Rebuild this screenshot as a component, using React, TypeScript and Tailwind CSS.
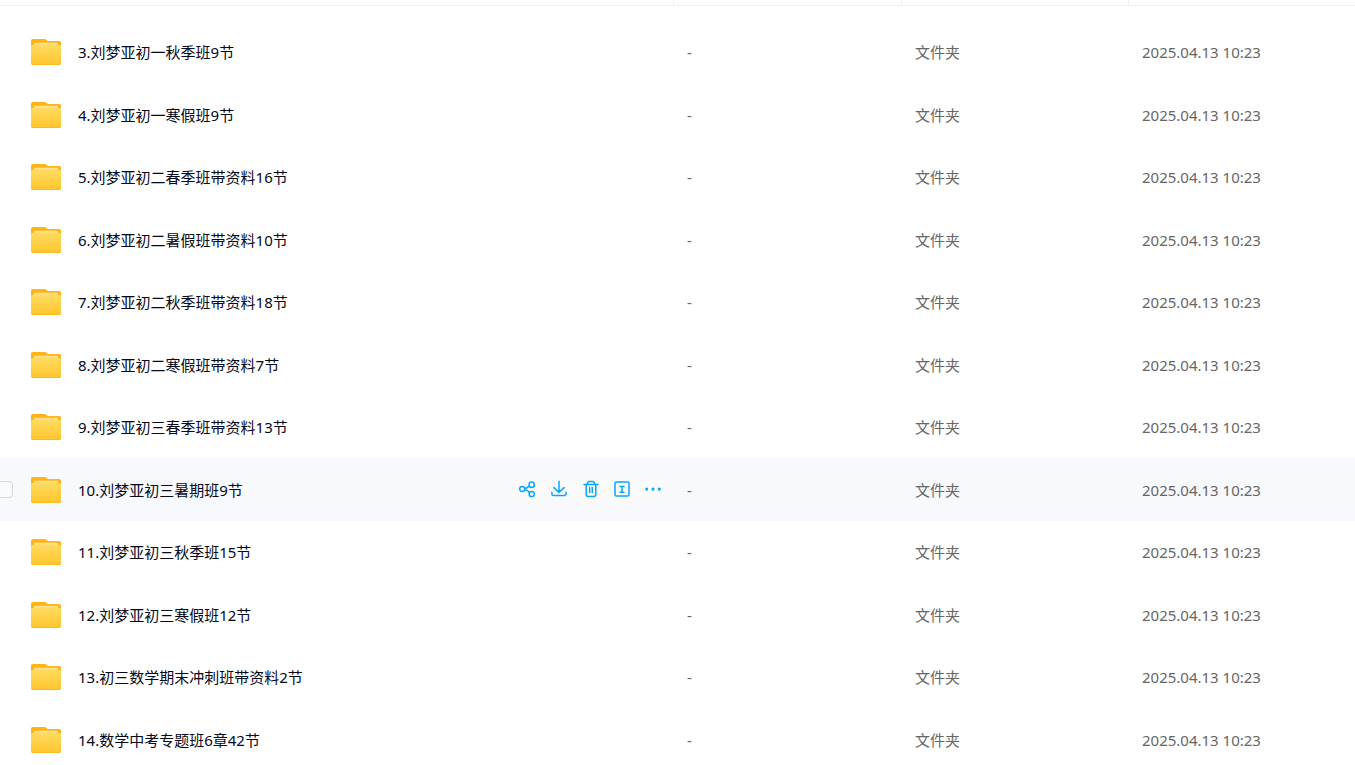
import type { ReactNode } from 'react';

const files = [
  { name: '3.刘梦亚初一秋季班9节' },
  { name: '4.刘梦亚初一寒假班9节' },
  { name: '5.刘梦亚初二春季班带资料16节' },
  { name: '6.刘梦亚初二暑假班带资料10节' },
  { name: '7.刘梦亚初二秋季班带资料18节' },
  { name: '8.刘梦亚初二寒假班带资料7节' },
  { name: '9.刘梦亚初三春季班带资料13节' },
  { name: '10.刘梦亚初三暑期班9节', active: true },
  { name: '11.刘梦亚初三秋季班15节' },
  { name: '12.刘梦亚初三寒假班12节' },
  { name: '13.初三数学期末冲刺班带资料2节' },
  { name: '14.数学中考专题班6章42节' },
];

const actions: { label: string; width: string; icon: ReactNode }[] = [
  {
    label: '分享',
    width: 'w-4',
    icon: (
      <>
        <circle cx="3.2" cy="9" r="2.5" />
        <circle cx="12.7" cy="4.7" r="2.6" />
        <circle cx="12.7" cy="14" r="2.6" />
        <path d="M5.7 8.6C7.6 8.4 9 7.6 10.4 6.1M5.7 9.5c1.9.2 3.3 1.1 4.7 2.8" />
      </>
    ),
  },
  {
    label: '下载',
    width: 'w-4',
    icon: <path d="M8 1.2v11M2.9 7.6 8 12.4l5.1-4.8M.9 12.2v1.9c0 .8.5 1.3 1.3 1.3h11.6c.8 0 1.3-.5 1.3-1.3v-1.9" />,
  },
  {
    label: '删除',
    width: 'w-[15px]',
    icon: (
      <>
        <path d="M1 4.4h14M4.1 4.2 5 2.1c.2-.5.5-.7 1-.7h4c.5 0 .8.2 1 .7l.9 2.1" />
        <path d="M3.2 4.6v9.6c0 1.5.9 2.4 2.3 2.4h5c1.4 0 2.3-.9 2.3-2.4V4.6M6.7 7.6v4.8M9.3 7.6v4.8" />
      </>
    ),
  },
  {
    label: '重命名',
    width: 'w-[15px]',
    icon: (
      <>
        <rect x="1" y="1.9" width="14" height="14.2" rx="1.3" />
        <path d="M6 6.4h4M6 12.2h4M8 6.4v5.8" />
      </>
    ),
  },
  {
    label: '更多',
    width: 'w-4',
    icon: (
      <g fill="currentColor" stroke="none">
        <circle cx="1.7" cy="9.1" r="1.6" />
        <circle cx="8" cy="9.1" r="1.6" />
        <circle cx="14.3" cy="9.1" r="1.6" />
      </g>
    ),
  },
];

function FolderIcon() {
  return (
    <svg className="h-[26px] w-[30px] shrink-0" viewBox="0 0 30 26" aria-hidden="true">
      <defs>
        <linearGradient id="folder-front" x1="0" y1="0" x2="0" y2="1">
          <stop offset="0" stopColor="#ffdb60" />
          <stop offset="1" stopColor="#ffc62e" />
        </linearGradient>
        <linearGradient id="folder-paper" x1="0" y1="0" x2="0" y2="1">
          <stop offset="0" stopColor="#ffe3a3" />
          <stop offset="1" stopColor="#ffdb60" />
        </linearGradient>
      </defs>
      <path d="M0 2C0 .8.8 0 2 0h11.6c.8 0 1.3.3 1.8.8l.7.7c.4.4.9.6 1.5.6H28c1.2 0 2 .8 2 2V15H0z" fill="#ffb414" />
      <path d="M0 7.5C0 6.5.6 6 1.6 6h26.8c1 0 1.6.5 1.6 1.5v16.4c0 1.3-.8 2.1-2.1 2.1H2.1C.8 26 0 25.2 0 23.9z" fill="#fdb71c" />
      <path d="M0 7.5C0 6.6.6 6 1.6 6h26.8c1 0 1.6.6 1.6 1.5v15.6c0 1.3-.8 2.1-2.1 2.1H2.1C.8 25.2 0 24.4 0 23.1z" fill="url(#folder-front)" />
      <path d="M3 6V4.9C3 4.2 3.5 3.8 4.2 3.8h21.6c.7 0 1.2.4 1.2 1.1V6.5H3z" fill="url(#folder-paper)" />
    </svg>
  );
}

function RowActions() {
  return (
    <div className="mr-[11px] flex h-[23px] shrink-0 items-center gap-4 bg-[#fafafa] pr-px pl-[7px] text-[#06a7ff]">
      {actions.map((action) => (
        <button key={action.label} type="button" aria-label={action.label} className={`flex cursor-pointer ${action.width}`}>
          <svg
            className="h-[19px] w-4 shrink-0"
            viewBox="0 0 16 19"
            fill="none"
            stroke="currentColor"
            strokeWidth="1.5"
            strokeLinecap="round"
            strokeLinejoin="round"
          >
            {action.icon}
          </svg>
        </button>
      ))}
    </div>
  );
}

export default function App() {
  return (
    <main className="h-screen overflow-hidden bg-white font-['Noto_Sans','Noto_Sans_CJK_SC',sans-serif] text-[15px] leading-5 text-[#666666]">
      <table className="w-full table-fixed border-separate border-spacing-0 text-left">
        <colgroup>
          <col />
          <col className="w-[228px]" />
          <col className="w-[227px]" />
          <col className="w-[227px]" />
        </colgroup>
        <thead>
          <tr className="h-1.5">
            <th scope="col" aria-label="文件名" className="border-b border-[#f1f1f1] p-0" />
            <th scope="col" aria-label="大小" className="border-b border-l border-[#f1f1f1] p-0" />
            <th scope="col" aria-label="类型" className="border-b border-l border-[#f1f1f1] p-0" />
            <th scope="col" aria-label="修改时间" className="border-b border-l border-[#f1f1f1] p-0" />
          </tr>
        </thead>
        <tbody className="before:block before:h-[15px] before:content-['']">
          {files.map((file) => (
            <tr key={file.name} className={`odd:h-[62px] even:h-[63px] ${file.active ? 'bg-[#f7f9fd]' : ''}`}>
              <td className="p-0">
                <div className="flex items-center">
                  <div className="flex w-[31px] shrink-0">
                    {file.active && (
                      <input
                        type="checkbox"
                        aria-label={file.name}
                        className="-ml-1 size-[17px] appearance-none rounded border border-[#d4d7de] bg-[#f9fafc]"
                      />
                    )}
                  </div>
                  <FolderIcon />
                  <a href="#" className="ml-[17px] min-w-0 flex-1 truncate text-[#03081a]">
                    {file.name}
                  </a>
                  {file.active && <RowActions />}
                </div>
              </td>
              <td className="p-0 pl-3.5">-</td>
              <td className="p-0 pl-3.5">文件夹</td>
              <td className="p-0 pl-3.5">2025.04.13 10:23</td>
            </tr>
          ))}
        </tbody>
      </table>
    </main>
  );
}
